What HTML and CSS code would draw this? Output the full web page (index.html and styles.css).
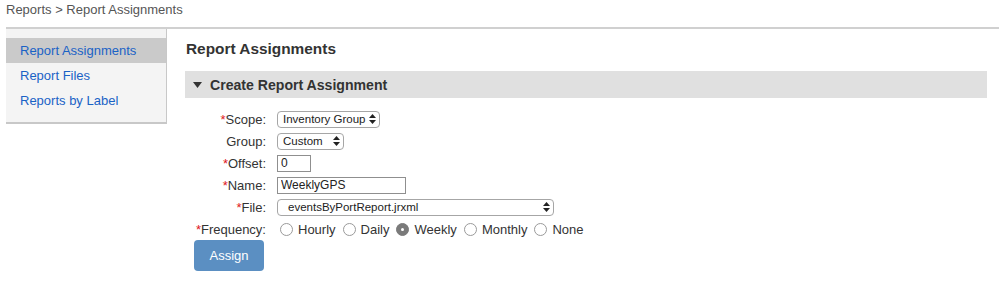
FILE: index.html
```html
<!DOCTYPE html>
<html lang="en">
  <head>
    <meta charset="UTF-8" />
    <title>Report Assignments</title>
    <link rel="stylesheet" href="styles.css">
  </head>
  <body>
    <div class="page">
      <div class="breadcrumb">Reports &gt; Report Assignments</div>

      <div class="layout">
        <!-- left nav -->
        <nav class="sidebar">
          <a class="nav-item active" href="#">Report Assignments</a>
          <a class="nav-item" href="#">Report Files</a>
          <a class="nav-item" href="#">Reports by Label</a>
        </nav>

        <main class="content">
          <h1>Report Assignments</h1>

          <div class="section-bar">
            <svg class="caret" width="9" height="6" viewBox="0 0 9 6"><path d="M0 0h9L4.5 6z" fill="#333"/></svg>
            Create Report Assignment
          </div>

          <form class="form">
            <label><span class="req">*</span>Scope:</label>
            <div class="field">
              <span class="select-wrap">
                <select class="select scope"><option>Inventory Group</option></select>
                <svg class="updown" width="7" height="10" viewBox="0 0 7 10"><path d="M3.5 0L7 4H0zM0 6h7L3.5 10z" fill="#222"/></svg>
              </span>
            </div>

            <label>Group:</label>
            <div class="field">
              <span class="select-wrap">
                <select class="select group"><option>Custom</option></select>
                <svg class="updown" width="7" height="10" viewBox="0 0 7 10"><path d="M3.5 0L7 4H0zM0 6h7L3.5 10z" fill="#222"/></svg>
              </span>
            </div>

            <label><span class="req">*</span>Offset:</label>
            <div class="field"><input class="text offset" type="text" value="0"></div>

            <label><span class="req">*</span>Name:</label>
            <div class="field"><input class="text name" type="text" value="WeeklyGPS"></div>

            <label><span class="req">*</span>File:</label>
            <div class="field">
              <span class="select-wrap">
                <select class="select file"><option>eventsByPortReport.jrxml</option></select>
                <svg class="updown" width="7" height="10" viewBox="0 0 7 10"><path d="M3.5 0L7 4H0zM0 6h7L3.5 10z" fill="#222"/></svg>
              </span>
            </div>

            <label><span class="req">*</span>Frequency:</label>
            <div class="field radios">
              <span class="radio"><span class="dot"></span>Hourly</span>
              <span class="radio"><span class="dot"></span>Daily</span>
              <span class="radio"><span class="dot checked"></span>Weekly</span>
              <span class="radio"><span class="dot"></span>Monthly</span>
              <span class="radio"><span class="dot"></span>None</span>
            </div>
          </form>

          <button class="btn" type="button">Assign</button>
        </main>
      </div>
    </div>
  </body>
</html>
```

FILE: styles.css
```css
body {
  margin: 0;
  font-family: "Liberation Sans", Arial, sans-serif;
  font-size: 13px;
  color: #333;
  background: #fff;
}

.page {
  margin-left: 6px;
}

.breadcrumb {
  height: 27px;
  line-height: 20px;
  color: #555;
  border-bottom: 2px solid #d0d0d0;
}

.layout {
  display: flex;
  align-items: flex-start;
}

/* left nav */
.sidebar {
  width: 160px;
  background: #f4f4f4;
  border-right: 1px solid #c8c8c8;
  border-bottom: 2px solid #c8c8c8;
  padding: 9px 0 9px;
  display: flex;
  flex-direction: column;
}
.nav-item {
  display: block;
  height: 25px;
  line-height: 25px;
  padding-left: 14px;
  color: #1a62c6;
  text-decoration: none;
}
.nav-item.active {
  background: #cacaca;
}

.content {
  flex: 1;
  padding: 0 12px 0 18px;
}
.content h1 {
  font-size: 15.4px;
  font-weight: bold;
  color: #333;
  margin: 10px 0 0 1px;
  height: 20px;
  line-height: 20px;
}

.section-bar {
  display: flex;
  align-items: center;
  gap: 8px;
  height: 27px;
  margin-top: 12px;
  padding-left: 8px;
  background: #e0e0e0;
  font-size: 14.1px;
  font-weight: bold;
  color: #333;
}

.form {
  display: grid;
  grid-template-columns: 81px auto;
  column-gap: 11px;
  grid-auto-rows: 22px;
  align-items: center;
  margin: 10px 0 0 0;
}
.form label {
  text-align: right;
  color: #333;
}
.req {
  color: #e0161b;
}
.field {
  display: flex;
  align-items: center;
}

.select-wrap {
  position: relative;
  display: inline-flex;
}
.select {
  appearance: none;
  -webkit-appearance: none;
  height: 17px;
  border: 1px solid #a6a6a6;
  border-radius: 4px;
  background: #fff;
  font-family: "Liberation Sans", Arial, sans-serif;
  font-size: 11.5px;
  color: #222;
  padding: 0 0 0 5px;
  margin: 0;
  line-height: 15px;
}
.select.scope { width: 103px; }
.select.group { width: 67px; }
.select.file { width: 277px; padding-left: 10px; }
.updown {
  position: absolute;
  right: 4px;
  top: 3px;
  pointer-events: none;
}

.text {
  height: 17px;
  box-sizing: border-box;
  border: 1px solid #8f8f8f;
  border-radius: 0;
  padding: 0 3px;
  margin: 0;
  font-family: "Liberation Sans", Arial, sans-serif;
  font-size: 12px;
  color: #222;
}
.text.offset { width: 34px; }
.text.name { width: 129px; }

.radios {
  font-size: 13px;
  color: #333;
  padding-left: 3px;
}
.radio {
  display: inline-flex;
  align-items: center;
  margin-right: 7px;
}
.dot {
  width: 13px;
  height: 13px;
  box-sizing: border-box;
  border: 1px solid #9a9a9a;
  border-radius: 50%;
  margin-right: 5px;
  background: #fff;
}
.dot.checked {
  background: #7a7a7a;
  border-color: #7a7a7a;
  position: relative;
}
.dot.checked::after {
  content: "";
  position: absolute;
  left: 4px;
  top: 4px;
  width: 3px;
  height: 3px;
  border-radius: 50%;
  background: #fff;
}

.btn {
  display: block;
  margin: 0 0 0 9px;
  width: 70px;
  height: 31px;
  border: none;
  border-radius: 4px;
  background: #5b8fc2;
  color: #fff;
  font-family: "Liberation Sans", Arial, sans-serif;
  font-size: 13px;
}
```
